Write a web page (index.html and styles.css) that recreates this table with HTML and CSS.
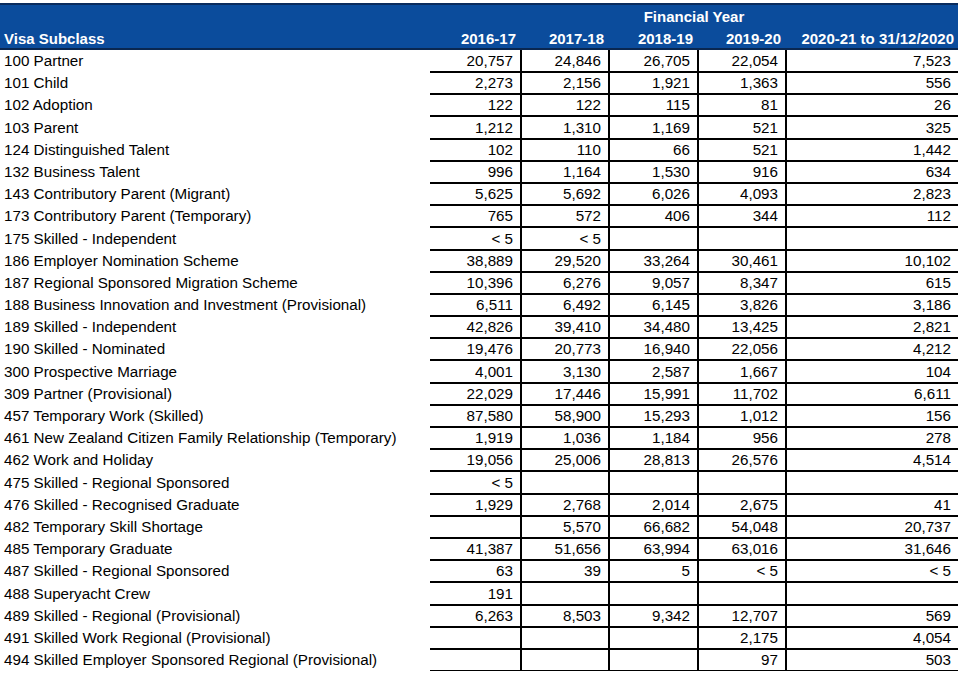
FILE: index.html
```html
<!DOCTYPE html>
<html>
<head>
<meta charset="utf-8">
<link rel="stylesheet" href="styles.css">
</head>
<body>
<div class="sheet">
  <div class="head">
    <div class="head-row">
      <div class="hc"></div>
      <div class="hc span">Financial Year</div>
    </div>
    <div class="head-row">
      <div class="hc lab">Visa Subclass</div>
      <div class="hc num">2016-17</div>
      <div class="hc num">2017-18</div>
      <div class="hc num">2018-19</div>
      <div class="hc num">2019-20</div>
      <div class="hc num">2020-21 to 31/12/2020</div>
    </div>
  </div>
  <div class="body" id="body">
    <div class="row"><div class="lab">100 Partner</div><div class="n">20,757</div><div class="n">24,846</div><div class="n">26,705</div><div class="n">22,054</div><div class="n">7,523</div></div>
    <div class="row"><div class="lab">101 Child</div><div class="n">2,273</div><div class="n">2,156</div><div class="n">1,921</div><div class="n">1,363</div><div class="n">556</div></div>
    <div class="row"><div class="lab">102 Adoption</div><div class="n">122</div><div class="n">122</div><div class="n">115</div><div class="n">81</div><div class="n">26</div></div>
    <div class="row"><div class="lab">103 Parent</div><div class="n">1,212</div><div class="n">1,310</div><div class="n">1,169</div><div class="n">521</div><div class="n">325</div></div>
    <div class="row"><div class="lab">124 Distinguished Talent</div><div class="n">102</div><div class="n">110</div><div class="n">66</div><div class="n">521</div><div class="n">1,442</div></div>
    <div class="row"><div class="lab">132 Business Talent</div><div class="n">996</div><div class="n">1,164</div><div class="n">1,530</div><div class="n">916</div><div class="n">634</div></div>
    <div class="row"><div class="lab">143 Contributory Parent (Migrant)</div><div class="n">5,625</div><div class="n">5,692</div><div class="n">6,026</div><div class="n">4,093</div><div class="n">2,823</div></div>
    <div class="row"><div class="lab">173 Contributory Parent (Temporary)</div><div class="n">765</div><div class="n">572</div><div class="n">406</div><div class="n">344</div><div class="n">112</div></div>
    <div class="row"><div class="lab">175 Skilled - Independent</div><div class="n">&lt; 5</div><div class="n">&lt; 5</div><div class="n"></div><div class="n"></div><div class="n"></div></div>
    <div class="row"><div class="lab">186 Employer Nomination Scheme</div><div class="n">38,889</div><div class="n">29,520</div><div class="n">33,264</div><div class="n">30,461</div><div class="n">10,102</div></div>
    <div class="row"><div class="lab">187 Regional Sponsored Migration Scheme</div><div class="n">10,396</div><div class="n">6,276</div><div class="n">9,057</div><div class="n">8,347</div><div class="n">615</div></div>
    <div class="row"><div class="lab">188 Business Innovation and Investment (Provisional)</div><div class="n">6,511</div><div class="n">6,492</div><div class="n">6,145</div><div class="n">3,826</div><div class="n">3,186</div></div>
    <div class="row"><div class="lab">189 Skilled - Independent</div><div class="n">42,826</div><div class="n">39,410</div><div class="n">34,480</div><div class="n">13,425</div><div class="n">2,821</div></div>
    <div class="row"><div class="lab">190 Skilled - Nominated</div><div class="n">19,476</div><div class="n">20,773</div><div class="n">16,940</div><div class="n">22,056</div><div class="n">4,212</div></div>
    <div class="row"><div class="lab">300 Prospective Marriage</div><div class="n">4,001</div><div class="n">3,130</div><div class="n">2,587</div><div class="n">1,667</div><div class="n">104</div></div>
    <div class="row"><div class="lab">309 Partner (Provisional)</div><div class="n">22,029</div><div class="n">17,446</div><div class="n">15,991</div><div class="n">11,702</div><div class="n">6,611</div></div>
    <div class="row"><div class="lab">457 Temporary Work (Skilled)</div><div class="n">87,580</div><div class="n">58,900</div><div class="n">15,293</div><div class="n">1,012</div><div class="n">156</div></div>
    <div class="row"><div class="lab">461 New Zealand Citizen Family Relationship (Temporary)</div><div class="n">1,919</div><div class="n">1,036</div><div class="n">1,184</div><div class="n">956</div><div class="n">278</div></div>
    <div class="row"><div class="lab">462 Work and Holiday</div><div class="n">19,056</div><div class="n">25,006</div><div class="n">28,813</div><div class="n">26,576</div><div class="n">4,514</div></div>
    <div class="row"><div class="lab">475 Skilled - Regional Sponsored</div><div class="n">&lt; 5</div><div class="n"></div><div class="n"></div><div class="n"></div><div class="n"></div></div>
    <div class="row"><div class="lab">476 Skilled - Recognised Graduate</div><div class="n">1,929</div><div class="n">2,768</div><div class="n">2,014</div><div class="n">2,675</div><div class="n">41</div></div>
    <div class="row"><div class="lab">482 Temporary Skill Shortage</div><div class="n"></div><div class="n">5,570</div><div class="n">66,682</div><div class="n">54,048</div><div class="n">20,737</div></div>
    <div class="row"><div class="lab">485 Temporary Graduate</div><div class="n">41,387</div><div class="n">51,656</div><div class="n">63,994</div><div class="n">63,016</div><div class="n">31,646</div></div>
    <div class="row"><div class="lab">487 Skilled - Regional Sponsored</div><div class="n">63</div><div class="n">39</div><div class="n">5</div><div class="n">&lt; 5</div><div class="n">&lt; 5</div></div>
    <div class="row"><div class="lab">488 Superyacht Crew</div><div class="n">191</div><div class="n"></div><div class="n"></div><div class="n"></div><div class="n"></div></div>
    <div class="row"><div class="lab">489 Skilled - Regional (Provisional)</div><div class="n">6,263</div><div class="n">8,503</div><div class="n">9,342</div><div class="n">12,707</div><div class="n">569</div></div>
    <div class="row"><div class="lab">491 Skilled Work Regional (Provisional)</div><div class="n"></div><div class="n"></div><div class="n"></div><div class="n">2,175</div><div class="n">4,054</div></div>
    <div class="row"><div class="lab">494 Skilled Employer Sponsored Regional (Provisional)</div><div class="n"></div><div class="n"></div><div class="n"></div><div class="n">97</div><div class="n">503</div></div>
  </div>
</div>
</body>
</html>
```
FILE: styles.css
```css
html, body {
  margin: 0;
  padding: 0;
  background: #fff;
}
body {
  font-family: "Liberation Sans", Arial, sans-serif;
  font-size: 15.2px;
  color: #000;
}
.sheet {
  width: 958px;
  padding-top: 3px;
}
.head {
  background: #0b4c9c;
  border-top: 2px solid #0a2c5e;
  border-bottom: 2px solid #0a2750;
  color: #fff;
  font-weight: bold;
  font-size: 15px;
}
.head-row,
.row {
  display: grid;
  grid-template-columns: 430px 90px 88px 89px 88px 173px;
}
.head-row:first-child {
  height: 23px;
  align-items: center;
}
.head-row:first-child .span {
  grid-column: 2 / 7;
  text-align: center;
}
.head-row:last-child {
  height: 20px;
  align-items: center;
}
.hc.lab {
  padding-left: 4px;
}
.hc.num {
  text-align: right;
  padding-right: 4px;
}
.row {
  height: 22.2px;
}
.row .lab {
  padding-left: 4px;
  line-height: 22px;
  white-space: nowrap;
}
.row .n {
  box-sizing: border-box;
  text-align: right;
  padding-right: 7px;
  border-bottom: 2px solid #000;
  line-height: 21px;
}
.row .n + .n {
  border-left: 2px solid #000;
}
```
